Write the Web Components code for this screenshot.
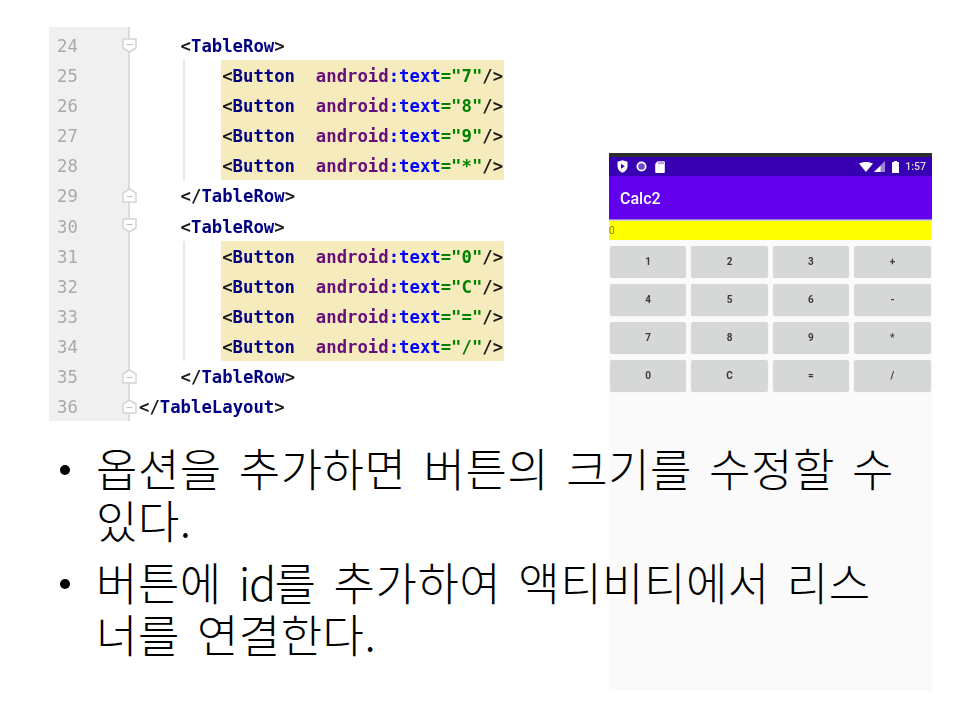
<!DOCTYPE html>
<html lang="ko"><head><meta charset="utf-8"><title>Calc2</title>
<style>html,body{margin:0;padding:0;background:#fff}</style></head>
<body>
<slide-page>
  <code-pane>
    <code-line num="24" indent="1" fold="open"><t-g>&lt;</t-g><t-n>TableRow</t-n><t-g>&gt;</t-g></code-line>
    <code-line num="25" item><t-g>&lt;</t-g><t-n>Button</t-n>  <t-a>android</t-a><t-b>:text</t-b><t-v>="7"</t-v><t-g>/&gt;</t-g></code-line>
    <code-line num="26" item><t-g>&lt;</t-g><t-n>Button</t-n>  <t-a>android</t-a><t-b>:text</t-b><t-v>="8"</t-v><t-g>/&gt;</t-g></code-line>
    <code-line num="27" item><t-g>&lt;</t-g><t-n>Button</t-n>  <t-a>android</t-a><t-b>:text</t-b><t-v>="9"</t-v><t-g>/&gt;</t-g></code-line>
    <code-line num="28" item><t-g>&lt;</t-g><t-n>Button</t-n>  <t-a>android</t-a><t-b>:text</t-b><t-v>="*"</t-v><t-g>/&gt;</t-g></code-line>
    <code-line num="29" indent="1" fold="close"><t-g>&lt;/</t-g><t-n>TableRow</t-n><t-g>&gt;</t-g></code-line>
    <code-line num="30" indent="1" fold="open"><t-g>&lt;</t-g><t-n>TableRow</t-n><t-g>&gt;</t-g></code-line>
    <code-line num="31" item><t-g>&lt;</t-g><t-n>Button</t-n>  <t-a>android</t-a><t-b>:text</t-b><t-v>="0"</t-v><t-g>/&gt;</t-g></code-line>
    <code-line num="32" item><t-g>&lt;</t-g><t-n>Button</t-n>  <t-a>android</t-a><t-b>:text</t-b><t-v>="C"</t-v><t-g>/&gt;</t-g></code-line>
    <code-line num="33" item><t-g>&lt;</t-g><t-n>Button</t-n>  <t-a>android</t-a><t-b>:text</t-b><t-v>="="</t-v><t-g>/&gt;</t-g></code-line>
    <code-line num="34" item><t-g>&lt;</t-g><t-n>Button</t-n>  <t-a>android</t-a><t-b>:text</t-b><t-v>="/"</t-v><t-g>/&gt;</t-g></code-line>
    <code-line num="35" indent="1" fold="close"><t-g>&lt;/</t-g><t-n>TableRow</t-n><t-g>&gt;</t-g></code-line>
    <code-line num="36" fold="close"><t-g>&lt;/</t-g><t-n>TableLayout</t-n><t-g>&gt;</t-g></code-line>
  </code-pane>
  <phone-shot></phone-shot>
  <bullet-list>
    <bullet-item>옵션을 추가하면 버튼의 크기를 수정할 수<br>있다.</bullet-item>
    <bullet-item>버튼에 <span style="letter-spacing:-1.5px">id</span>를 추가하여 액티비티에서 리스<br>너를 연결한다.</bullet-item>
  </bullet-list>
</slide-page>
<script>
function def(name, css, html){
  customElements.define(name, class extends HTMLElement{
    constructor(){super();this.attachShadow({mode:'open'}).innerHTML='<style>'+css+'</style>'+(typeof html==='function'?html(this):html);}
  });
}
def('slide-page',`:host{display:block;position:relative;width:960px;height:720px;overflow:hidden;background:#fff;padding-top:27px;box-sizing:border-box}`,'<slot></slot>');
def('code-pane',`:host{display:block;width:456px;margin-left:49px;padding:3px 0 0;position:relative;filter:blur(.4px);
  font:bold 17.3px "DejaVu Sans Mono","Liberation Mono",monospace;color:#111;
  background:linear-gradient(90deg,#f0f0f0 79px,#dcdcdc 79px,#dcdcdc 81px,transparent 81px)}`,'<slot></slot>');
const colors={'t-g':'#1a1a1a','t-n':'#000080','t-a':'#660e7a','t-b':'#0000ff','t-v':'#008000'};
for(const k in colors) def(k,`:host{display:inline;color:${colors[k]}}`,'<slot></slot>');
const openMark='<svg width="15" height="15" viewBox="0 0 15 15"><path d="M1 1H14V10L7.5 14L1 10Z" fill="#fff" stroke="#d4d4d4" stroke-width="1.5"/><path d="M4.5 6.5H10.5" stroke="#c4c4c4" stroke-width="1.2"/></svg>';
const closeMark='<svg width="15" height="15" viewBox="0 0 15 15"><path d="M1 14H14V5L7.5 1L1 5Z" fill="#fff" stroke="#d4d4d4" stroke-width="1.5"/><path d="M4.5 8.5H10.5" stroke="#c4c4c4" stroke-width="1.2"/></svg>';
def('code-line',`:host{display:flex;height:30.08px;align-items:stretch;position:relative;white-space:pre}
  .n{width:81px;box-sizing:border-box;padding:2px 0 0 8px;color:#a9a9a9;font-weight:normal;display:flex;align-items:center;flex:none}
  .c{display:flex;align-items:center;padding-left:9px;flex:1}
  .t{display:block;padding-top:2px}
  .sp{width:41.6px;flex:none;align-self:stretch}
  .g{width:38px;flex:none;align-self:stretch;box-sizing:border-box;border-left:2px solid #e8e8e8;margin-left:2.4px}
  .h{background:#f6ebbc;align-self:stretch;display:flex;align-items:center;padding-left:1.2px;width:283px;flex:none;box-sizing:border-box}
  .f{position:absolute;left:73px;top:8px;width:15px;height:15px;line-height:0}`,
  el=>{
    const num=el.getAttribute('num'), fold=el.getAttribute('fold'), item=el.hasAttribute('item'), ind=el.hasAttribute('indent');
    let c='<span class="t"><slot></slot></span>';
    if(item) c='<span class="sp"></span><span class="g"></span><span class="h">'+c+'</span>';
    if(ind) c='<span class="sp"></span>'+c;
    const mark=fold?'<span class="f">'+(fold==='open'?openMark:closeMark)+'</span>':'';
    return '<span class="n">'+num+'</span>'+mark+'<span class="c">'+c+'</span>';
  });
def('calc-key',`:host{display:flex;align-items:center;justify-content:center;height:31px;background:#d6d7d7;border-radius:2px;
  box-shadow:0 1px 1px rgba(0,0,0,.16);font:700 10px Roboto,sans-serif;color:#3a3a3a}`,'<slot></slot>');
def('phone-shot',`:host{display:flex;flex-direction:column;position:absolute;left:609px;top:153px;width:323px;height:538px;background:#fafafa;filter:blur(.4px);font-family:Roboto,sans-serif}
  .top{height:4px;background:#2e2e2e}
  .status{height:19px;background:#3700b3;display:flex;align-items:center;color:#fff;padding:0 6px 0 8px;font:500 10.5px Roboto,sans-serif}
  .status svg{display:block;flex:none}
  .sp{flex:1}
  .bar{height:44px;background:#6200ee;color:#fff;display:flex;align-items:center;padding:2px 0 0 11px;font:500 16px Roboto,sans-serif;box-sizing:border-box;border-bottom:1px solid #9c84cf}
  .shade{height:1px;background:#cfcfcf}
  .disp{height:19px;width:322px;background:#ff0;font:10px/19px Roboto,sans-serif;color:#8c8c00}
  .grid{display:grid;grid-template-columns:repeat(4,76.4px);column-gap:5px;row-gap:7px;padding:5.500px 0 0 1px}`,
  `<div class="top"></div>
  <div class="status">
    <svg width="11" height="13" viewBox="0 0 11 13"><path d="M.5 1.8 5.5.3l5 1.5v4.6c0 2.9-2.2 5-5 6.3-2.8-1.3-5-3.4-5-6.3Z" fill="#fff"/><path d="M4 3.8 7.8 6.3 4 8.8Z" fill="#3700b3"/></svg>
    <svg style="margin-left:8px" width="11" height="11" viewBox="0 0 11 11"><circle cx="5.5" cy="5.5" r="5" fill="#fff"/><circle cx="5.5" cy="5.5" r="3.3" fill="#6a4cc8"/></svg>
    <svg style="margin-left:8px" width="10" height="12" viewBox="0 0 10 12"><path d="M2.5.3H9a.8.8 0 0 1 .8.8v10a.8.8 0 0 1-.8.8H1a.8.8 0 0 1-.8-.8V3Z" fill="#fff"/><path d="M4 .8v2.4M6 .8v2.4M8 .8v2.4" stroke="#3700b3" stroke-width=".7"/></svg>
    <span class="sp"></span>
    <svg width="14" height="10" viewBox="0 0 14 10"><path d="M0 1.600C2 .5 4.400 0 7 0s5 .5 7 1.600L7 10Z" fill="#fff"/></svg>
    <svg style="margin-left:1px" width="11" height="11" viewBox="0 0 11 11"><path d="M11 0V11H0Z" fill="#9c86d6"/><path d="M6.500 4.700V11H0Z" fill="#fff"/></svg>
    <svg style="margin-left:7px" width="7" height="12" viewBox="0 0 7 12"><path d="M2 0H5V1H6.400A.6.6 0 0 1 7 1.600V11.400A.6.6 0 0 1 6.400 12H.6A.6.6 0 0 1 0 11.400V1.600A.6.6 0 0 1 .6 1H2Z" fill="#fff"/></svg>
    <span style="margin-left:6px;color:#ddd">1:57</span>
  </div>
  <div class="bar">Calc2</div>
  <div class="shade"></div>
  <div class="disp">0</div>
  <div class="grid">
    <calc-key>1</calc-key><calc-key>2</calc-key><calc-key>3</calc-key><calc-key>+</calc-key>
    <calc-key>4</calc-key><calc-key>5</calc-key><calc-key>6</calc-key><calc-key>-</calc-key>
    <calc-key>7</calc-key><calc-key>8</calc-key><calc-key>9</calc-key><calc-key>*</calc-key>
    <calc-key>0</calc-key><calc-key>C</calc-key><calc-key>=</calc-key><calc-key>/</calc-key>
  </div>`);
def('bullet-list',`:host{display:flex;flex-direction:column;gap:10px;position:relative;margin:21px 0 0 56px;
  font:300 45px/52px "Noto Sans CJK KR","Noto Sans",sans-serif;letter-spacing:.5px;color:#000;word-spacing:4px;white-space:nowrap}`,'<slot></slot>');
def('bullet-item',`:host{display:block;position:relative;padding-left:40px}
  .b{position:absolute;left:4px;top:23px;width:10px;height:10px;border-radius:50%;background:#000}`,'<span class="b"></span><slot></slot>');
</script>
</body></html>
